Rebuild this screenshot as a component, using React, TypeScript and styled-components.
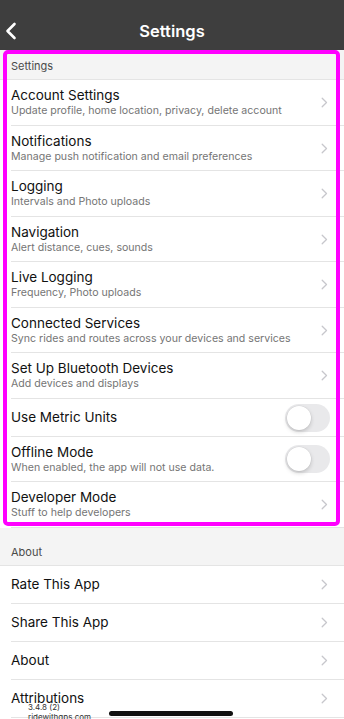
import React, { useState } from 'react';
import styled, { createGlobalStyle } from 'styled-components';

const GlobalStyle = createGlobalStyle`
  html, body {
    margin: 0;
    padding: 0;
    background: #ffffff;
    font-family: Inter, "Liberation Sans", Arial, sans-serif;
    -webkit-font-smoothing: antialiased;
  }
  #root {
    height: 719px;
    overflow: hidden;
  }
`;

const Screen = styled.div`
  position: relative;
  width: 344px;
  height: 719px;
  overflow: hidden;
  background: #ffffff;
`;

const NavBar = styled.header`
  height: 50px;
  background: #3e3e3e;
  display: grid;
  grid-template-columns: 40px 1fr 40px;
  align-items: end;
  padding-bottom: 8px;
  box-sizing: border-box;
`;

const BackButton = styled.button`
  border: none;
  background: none;
  padding: 0 0 0 5px;
  display: flex;
  align-items: center;
  height: 22px;
  cursor: pointer;
`;

const NavTitle = styled.h1`
  margin: 0;
  text-align: center;
  color: #ffffff;
  font-size: 16.5px;
  font-weight: 600;
  line-height: 22px;
`;

const SectionHeader = styled.div<{ $height: number }>`
  height: ${p => p.$height}px;
  box-sizing: border-box;
  background: #f4f4f4;
  display: flex;
  align-items: flex-end;
  padding: 0 11px 6px;
  font-size: 11px;
  line-height: 14px;
  color: #4a4a4a;
  border-bottom: 1px solid #e4e4e4;
`;

const Row = styled.div<{ $height: number }>`
  height: ${p => p.$height}px;
  box-sizing: border-box;
  padding-left: 11px;
  position: relative;
  background: #ffffff;
`;

const RowInner = styled.div`
  height: 100%;
  box-sizing: border-box;
  display: flex;
  align-items: center;
  padding-top: 1px;
  padding-right: 14px;
  border-bottom: 1px solid #e4e4e4;
`;

const RowText = styled.div`
  flex: 1;
  min-width: 0;
  display: flex;
  flex-direction: column;
`;

const RowTitle = styled.div`
  font-size: 13.5px;
  line-height: 17px;
  color: #111111;
`;

const RowSubtitle = styled.div`
  font-size: 10.6px;
  line-height: 14px;
  color: #757575;
  white-space: nowrap;
`;

const Chevron = styled.svg`
  flex: none;
  margin-right: 2px;
`;

const Track = styled.button<{ $on: boolean }>`
  flex: none;
  width: 45px;
  height: 28px;
  border-radius: 14px;
  border: none;
  padding: 2px;
  box-sizing: border-box;
  background: ${p => (p.$on ? '#34c759' : '#e9e9eb')};
  display: flex;
  justify-content: ${p => (p.$on ? 'flex-end' : 'flex-start')};
  cursor: pointer;
`;

const Knob = styled.span`
  width: 24px;
  height: 24px;
  border-radius: 50%;
  background: #ffffff;
  box-shadow: 0 2px 4px rgba(0, 0, 0, 0.18), 0 0 0 0.5px rgba(0, 0, 0, 0.06);
`;

const VersionInfo = styled.div`
  position: absolute;
  left: 28px;
  top: 22px;
  font-size: 8px;
  line-height: 10px;
  color: #333333;
`;

const Highlight = styled.div`
  position: absolute;
  left: 3px;
  top: 50px;
  width: 337px;
  height: 476px;
  box-sizing: border-box;
  border: 4px solid #ff00ff;
  border-radius: 5px;
  pointer-events: none;
`;

const HomeIndicator = styled.div`
  position: absolute;
  left: 109px;
  bottom: 3px;
  width: 124px;
  height: 5px;
  border-radius: 3px;
  background: #111111;
`;

type Item = {
  title: string;
  subtitle?: string;
  toggle?: boolean;
};

const settingsItems: Item[] = [
  { title: 'Account Settings', subtitle: 'Update profile, home location, privacy, delete account' },
  { title: 'Notifications', subtitle: 'Manage push notification and email preferences' },
  { title: 'Logging', subtitle: 'Intervals and Photo uploads' },
  { title: 'Navigation', subtitle: 'Alert distance, cues, sounds' },
  { title: 'Live Logging', subtitle: 'Frequency, Photo uploads' },
  { title: 'Connected Services', subtitle: 'Sync rides and routes across your devices and services' },
  { title: 'Set Up Bluetooth Devices', subtitle: 'Add devices and displays' },
  { title: 'Use Metric Units', toggle: true },
  { title: 'Offline Mode', subtitle: 'When enabled, the app will not use data.', toggle: true },
  { title: 'Developer Mode', subtitle: 'Stuff to help developers' },
];

const aboutItems: Item[] = [
  { title: 'Rate This App' },
  { title: 'Share This App' },
  { title: 'About' },
  { title: 'Attributions' },
];

const ChevronIcon = () => (
  <Chevron width="7" height="11" viewBox="0 0 7 11">
    <path d="M1.2 1.2l4.3 4.3-4.3 4.3" fill="none" stroke="#c7c7cc" strokeWidth="1.3" strokeLinecap="round" strokeLinejoin="round" />
  </Chevron>
);

const Toggle: React.FC<{ initial?: boolean }> = ({ initial = false }) => {
  const [on, setOn] = useState(initial);
  return (
    <Track $on={on} onClick={() => setOn(!on)} aria-pressed={on}>
      <Knob />
    </Track>
  );
};

const SettingsRow: React.FC<{ item: Item; children?: React.ReactNode }> = ({ item, children }) => (
  <Row $height={item.subtitle ? 45.5 : 38}>
    <RowInner>
      <RowText>
        <RowTitle>{item.title}</RowTitle>
        {item.subtitle && <RowSubtitle>{item.subtitle}</RowSubtitle>}
      </RowText>
      {item.toggle ? <Toggle /> : <ChevronIcon />}
    </RowInner>
    {children}
  </Row>
);

const App: React.FC = () => {
  return (
    <>
      <GlobalStyle />
      <Screen>
        <NavBar>
          <BackButton aria-label="Back">
            <svg width="12" height="18" viewBox="0 0 12 18">
              <path d="M9.5 2L2.5 9l7 7" fill="none" stroke="#ffffff" strokeWidth="2.6" strokeLinecap="round" strokeLinejoin="round" />
            </svg>
          </BackButton>
          <NavTitle>Settings</NavTitle>
          <span />
        </NavBar>

        <SectionHeader $height={30}>Settings</SectionHeader>
        {settingsItems.map(item => (
          <SettingsRow key={item.title} item={item} />
        ))}

        <SectionHeader $height={38}>About</SectionHeader>
        {aboutItems.map(item => (
          <SettingsRow key={item.title} item={item}>
            {item.title === 'Attributions' && (
              <VersionInfo>
                3.4.8 (2)
                <br />
                ridewithgps.com
              </VersionInfo>
            )}
          </SettingsRow>
        ))}

        <Highlight />
        <HomeIndicator />
      </Screen>
    </>
  );
};

export default App;
